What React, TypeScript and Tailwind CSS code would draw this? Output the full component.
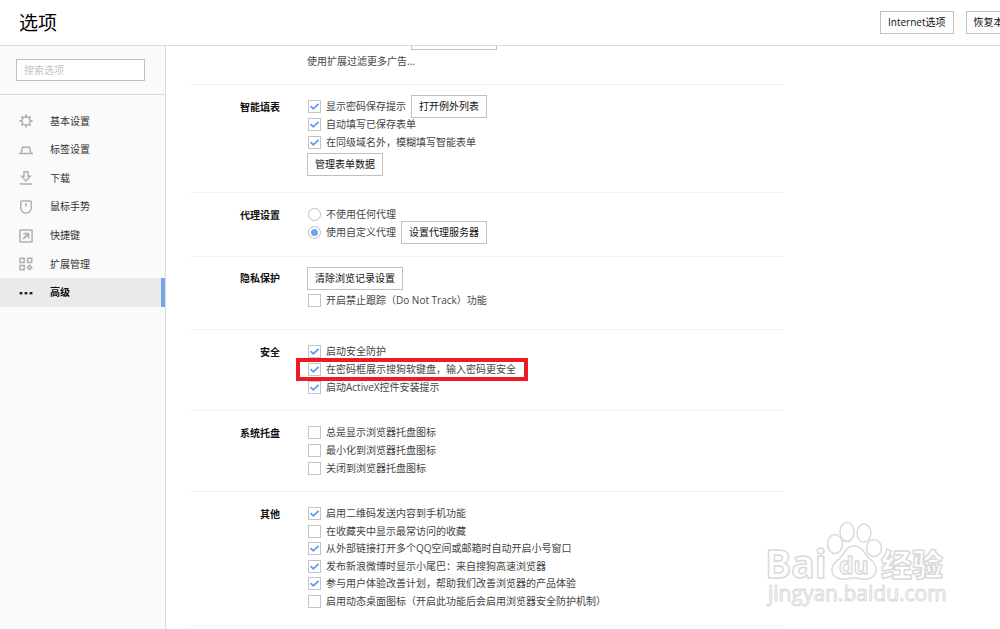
import React from 'react';

interface OptionProps {
  id: string;
  label: string;
  type?: 'checkbox' | 'radio';
  checked?: boolean;
  marked?: boolean;
  children?: React.ReactNode;
}

const Option: React.FC<OptionProps> = ({ id, label, type = 'checkbox', checked = false, marked = false, children }) => {
  return <div className="relative flex h-full items-center whitespace-nowrap">
      <span className="relative ml-px flex h-[13px] w-[13px] shrink-0">
        {type === 'radio'
          ? <input id={id} type="radio" name="proxy" defaultChecked={checked} className="flex h-[13px] w-[13px] appearance-none items-center justify-center rounded-full border border-[#bdbdbd] bg-white checked:before:h-[7px] checked:before:w-[7px] checked:before:rounded-full checked:before:bg-[#6ea6ec]" />
          : <>
            <input id={id} type="checkbox" defaultChecked={checked} className="peer h-[13px] w-[13px] appearance-none border border-[#c4c4c4] bg-white" />
            <svg viewBox="0 0 13 13" className="pointer-events-none absolute inset-0 hidden h-[13px] w-[13px] peer-checked:block" fill="none" stroke="#5b9bea" strokeWidth="1.7">
              <path d="M2.6 6.2 L5.3 8.9 L10.6 3.8" />
            </svg>
          </>}
      </span>
      <label htmlFor={id} className="ml-[5px]">{label}</label>
      {children}
      {marked && <span className="pointer-events-none absolute -inset-y-[3px] -left-[11px] w-[232px] border-4 border-[#ed1c24]" />}
    </div>;
};

const Button: React.FC<{ children: React.ReactNode; className?: string }> = ({ children, className = '' }) => {
  return <button type="button" className={`h-[23px] shrink-0 whitespace-nowrap border border-[#c0c0c0] bg-white px-[7px] text-[#111] ${className}`}>
      {children}
    </button>;
};

const Section: React.FC<{ title: string; className: string; children: React.ReactNode; tall?: boolean }> = ({ title, className, children, tall }) => {
  return <section className={`flex gap-[27px] border-b border-[#f3f3f3] ${className}`}>
      <h2 className={`w-[90px] shrink-0 text-right font-bold text-[#111] ${tall ? 'leading-[23px]' : 'leading-[18px]'}`}>{title}</h2>
      <div className="min-w-0 flex-1">{children}</div>
    </section>;
};

const GearIcon = () => <svg viewBox="0 0 14 14" className="h-[14px] w-[14px]" fill="none" stroke="#b0b0b0" strokeWidth="1.5">
    <circle cx="7" cy="7" r="4.1" />
    <path strokeWidth="2" d="M7 .5V2.9M7 11.1v2.4M.5 7h2.4M11.1 7h2.4M2.4 2.4l1.6 1.6M10 10l1.6 1.6M11.6 2.4L10 4M4 10l-1.6 1.6" />
  </svg>;

const TabIcon = () => <svg viewBox="0 0 14 14" className="h-[14px] w-[14px]" fill="none" stroke="#b0b0b0" strokeWidth="1.5">
    <path d="M0 10.5H14M2 10.3L3.6 4.2H10.4L12 10.3" />
  </svg>;

const DownloadIcon = () => <svg viewBox="0 0 14 14" className="h-[14px] w-[14px]" fill="none" stroke="#b0b0b0" strokeWidth="1.5">
    <path d="M5 .8H9V5.2H11.4L7 9.9L2.6 5.2H5ZM.8 13H13" />
  </svg>;

const MouseIcon = () => <svg viewBox="0 0 14 14" className="h-[14px] w-[14px]" fill="none" stroke="#b0b0b0" strokeWidth="1.5">
    <path d="M2.6 .9H11.4Q12.2 .9 12.2 1.7V8A5.2 5.2 0 0 1 1.8 8V1.7Q1.8 .9 2.6 .9ZM7 3V6.8" />
  </svg>;

const ShortcutIcon = () => <svg viewBox="0 0 14 14" className="h-[14px] w-[14px]" fill="none" stroke="#b0b0b0" strokeWidth="1.5">
    <rect x=".9" y="1" width="12.2" height="12" rx=".6" />
    <path strokeWidth="1.8" d="M4.4 4.6H9.5V9.6M9.4 4.7L4.2 9.9" />
  </svg>;

const ExtensionIcon = () => <svg viewBox="0 0 14 14" className="h-[14px] w-[14px]" fill="none" stroke="#b0b0b0" strokeWidth="1.5">
    <rect x="1" y="1.3" width="4.2" height="4.2" />
    <rect x="8.5" y="1.3" width="4.2" height="4.2" />
    <rect x="1" y="8.5" width="4.2" height="4.2" />
    <path d="M10.6 8.4L12.8 10.6L10.6 12.8L8.4 10.6Z" />
  </svg>;

const MoreIcon = () => <svg viewBox="0 0 14 14" className="h-[14px] w-[14px]" fill="#222">
    <rect x=".6" y="6" width="2.8" height="2.4" />
    <rect x="5.6" y="6" width="2.8" height="2.4" />
    <rect x="10.6" y="6" width="2.8" height="2.4" />
  </svg>;

const navItems = [
  { name: '基本设置', icon: GearIcon },
  { name: '标签设置', icon: TabIcon },
  { name: '下载', icon: DownloadIcon },
  { name: '鼠标手势', icon: MouseIcon },
  { name: '快捷键', icon: ShortcutIcon },
  { name: '扩展管理', icon: ExtensionIcon },
  { name: '高级', icon: MoreIcon, active: true },
];

const Sidebar = () => {
  return <aside className="w-[166px] shrink-0 border-r border-[#dcdcdc] bg-[#fafafa]">
      <div className="border-b border-[#dcdcdc] px-4 pt-[13px] pb-[13px]">
        <input type="text" placeholder="搜索选项" className="block h-[22px] w-[129px] border border-[#c0c0c0] bg-white px-[7px] placeholder:text-[#c4c4c4]" />
      </div>
      <nav className="mt-3 grid h-[200px] auto-rows-fr">
        {navItems.map(({ name, icon: Icon, active }) => <a key={name} href="#" className={`flex items-center pl-[19px] ${active ? 'border-r-4 border-[#73a8ec] bg-[#eaeaea] font-bold text-[#111]' : 'text-[#333]'}`}>
            <Icon />
            <span className="ml-[17px]">{name}</span>
          </a>)}
      </nav>
    </aside>;
};

const Watermark = () => {
  return <svg viewBox="0 0 190 92" className="pointer-events-none absolute right-[50px] bottom-[18px] h-[92px] w-[190px]" fill="#fff" stroke="#dadada" strokeWidth="1.5" strokeLinejoin="round">
      <g fontFamily='"Open Sans", "Noto Sans CJK SC", sans-serif' fontWeight="700">
        <text x="5" y="59" fontSize="39">Bai</text>
        <ellipse cx="75" cy="25" rx="7.5" ry="9.5" />
        <ellipse cx="87" cy="13" rx="7" ry="9.5" />
        <ellipse cx="104" cy="14" rx="7" ry="9" />
        <ellipse cx="114" cy="29" rx="7.5" ry="8.5" />
        <path d="M94 27C102 27 104 34 109 39C114 43 117 47 116 52C115 59 108 61 101 60Q94 58 87 60C80 61 73 59 72 52C71 46 76 43 80 39C85 34 86 27 94 27Z" />
        <text x="79" y="55" fontSize="23">du</text>
        <text x="121" y="57" fontSize="31" fontWeight="900">经验</text>
      </g>
      <text x="8" y="82" fontSize="21" fontFamily='"Open Sans", sans-serif' strokeWidth="1">jingyan.baidu.com</text>
    </svg>;
};

export default function App() {
  return <div className="relative flex min-h-screen flex-col overflow-hidden bg-white font-['Open_Sans','Noto_Sans_CJK_SC',sans-serif] text-[10px] leading-[17px] text-[#444]">
      <header className="flex h-[46px] items-center justify-between border-b border-[#dcdcdc] pl-[19px]">
        <h1 className="text-[19px] leading-6 text-black">选项</h1>
        <div className="flex w-[120px] gap-3 overflow-hidden">
          <Button>Internet选项</Button>
          <Button className="w-[100px] text-left">恢复本</Button>
        </div>
      </header>

      <div className="flex flex-1">
        <Sidebar />
        <main className="min-w-0 flex-1 pl-6">
          <div className="max-w-[594px]">
            <div className="border-b border-[#f3f3f3] pb-[14px] pl-[117px]">
              <button type="button" className="ml-[104px] block h-1 w-[86px] border border-t-0 border-[#c0c0c0]" />
              <a href="#" className="mt-[3px] block">使用扩展过滤更多广告...</a>
            </div>

            <Section title="智能填表" className="pt-[13px] pb-4">
              <div className="grid h-[53px] auto-rows-fr">
                <Option id="fill-tip" label="显示密码保存提示" checked>
                  <Button className="ml-[5px]">打开例外列表</Button>
                </Option>
                <Option id="fill-saved" label="自动填写已保存表单" checked />
                <Option id="fill-fuzzy" label="在同级域名外，模糊填写智能表单" checked />
              </div>
              <Button className="mt-[2px] block">管理表单数据</Button>
            </Section>

            <Section title="代理设置" className="pt-[13px] pb-[15px]">
              <div className="grid h-[35px] auto-rows-fr">
                <Option id="proxy-none" type="radio" label="不使用任何代理" />
                <Option id="proxy-custom" type="radio" label="使用自定义代理" checked>
                  <Button className="ml-[5px]">设置代理服务器</Button>
                </Option>
              </div>
            </Section>

            <Section title="隐私保护" className="pt-[10px] pb-5" tall>
              <Button className="block">清除浏览记录设置</Button>
              <div className="mt-[2px] h-[17px]">
                <Option id="dnt" label="开启禁止跟踪（Do Not Track）功能" />
              </div>
            </Section>

            <Section title="安全" className="pt-[13px] pb-[14px]">
              <div className="grid h-[53px] auto-rows-fr">
                <Option id="safe-guard" label="启动安全防护" checked />
                <Option id="safe-keyboard" label="在密码框展示搜狗软键盘，输入密码更安全" checked marked />
                <Option id="safe-activex" label="启动ActiveX控件安装提示" checked />
              </div>
            </Section>

            <Section title="系统托盘" className="pt-[13px] pb-[14px]">
              <div className="grid h-[53px] auto-rows-fr">
                <Option id="tray-always" label="总是显示浏览器托盘图标" />
                <Option id="tray-min" label="最小化到浏览器托盘图标" />
                <Option id="tray-close" label="关闭到浏览器托盘图标" />
              </div>
            </Section>

            <Section title="其他" className="pt-[13px] pb-[15px]">
              <div className="grid h-[105px] auto-rows-fr">
                <Option id="other-qr" label="启用二维码发送内容到手机功能" checked />
                <Option id="other-fav" label="在收藏夹中显示最常访问的收藏" />
                <Option id="other-qq" label="从外部链接打开多个QQ空间或邮箱时自动开启小号窗口" checked />
                <Option id="other-weibo" label="发布新浪微博时显示小尾巴：来自搜狗高速浏览器" checked />
                <Option id="other-ux" label="参与用户体验改善计划，帮助我们改善浏览器的产品体验" checked />
                <Option id="other-desktop" label="启用动态桌面图标（开启此功能后会启用浏览器安全防护机制）" />
              </div>
            </Section>
          </div>
        </main>
      </div>

      <Watermark />
    </div>;
}
